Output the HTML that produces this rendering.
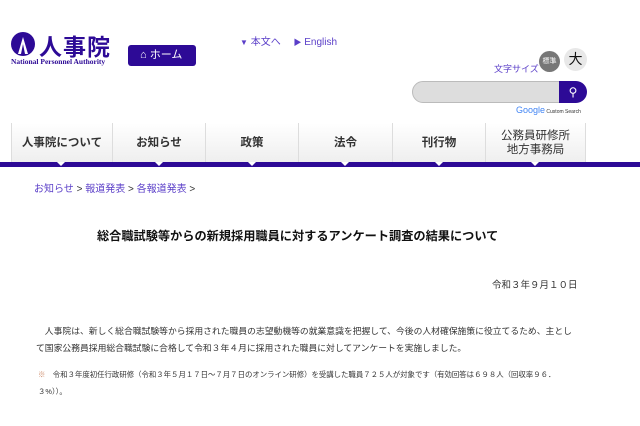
<!DOCTYPE html>
<html><head><meta charset="utf-8"><style>
*{margin:0;padding:0;box-sizing:border-box}
body{width:640px;height:426px;background:#fff;font-family:"Liberation Sans","Noto Sans CJK JP",sans-serif;position:relative;overflow:hidden;color:#222}
.a{position:absolute;white-space:nowrap}
.nav{position:absolute;top:123px;height:40px;border-left:1px solid #ddd;background:linear-gradient(#fff,#eee);font-size:11.5px;font-weight:bold;color:#333;display:flex;align-items:center;justify-content:center;text-align:center;line-height:14px}
.bar{position:absolute;left:0;top:162px;width:640px;height:5px;background:#2d0a96}
.notch{position:absolute;top:162px;width:0;height:0;border-left:4px solid transparent;border-right:4px solid transparent;border-top:4px solid #fff}
</style></head><body>
<svg class="a" style="left:11px;top:32px" width="24" height="24" viewBox="0 0 24 24"><circle cx="12" cy="12" r="12" fill="#2d0a96"/><path d="M12 5 L7 22 L10 22 L12 12 L14 22 L17 22 Z" fill="#fff"/></svg>
<div class="a" style="left:39px;top:28px;font-size:23px;font-weight:bold;color:#2d0a96;letter-spacing:1px">人事院</div>
<div class="a" style="left:11px;top:57px;font-size:7.5px;font-weight:bold;color:#2d0a96;font-family:'Liberation Serif',serif">National Personnel Authority</div>
<div class="a" style="left:128px;top:45px;width:68px;height:21px;background:#2d0a96;border-radius:3px;color:#fff;font-size:11px;line-height:21px;padding-left:12px">⌂ ホーム</div>
<div class="a" style="left:240px;top:33px;font-size:10px;color:#5a3ec8"><span style="font-size:8px">▼</span> 本文へ　 <span style="font-size:8px">▶</span> English</div>
<div class="a" style="left:494px;top:62px;font-size:9px;color:#5a3ec8">文字サイズ</div>
<div class="a" style="left:539px;top:51px;width:21px;height:21px;border-radius:50%;background:#777;color:#fff;font-size:7px;line-height:21px;text-align:center">標準</div>
<div class="a" style="left:564px;top:48px;width:23px;height:23px;border-radius:50%;background:#e8e8e8;color:#111;font-size:14px;line-height:23px;text-align:center">大</div>
<div class="a" style="left:412px;top:81px;width:150px;height:22px;border-radius:11px 0 0 11px;background:#ddd;border:1px solid #bbb"></div>
<div class="a" style="left:559px;top:81px;width:28px;height:22px;border-radius:0 11px 11px 0;background:#2d0a96;color:#fff;font-size:12px;line-height:22px;text-align:center">⚲</div>
<div class="a" style="left:516px;top:105px;font-size:9px;color:#4285f4">Google<span style="font-size:5px;color:#333"> Custom Search</span></div>
<div class="nav" style="left:11px;width:101px">人事院について</div>
<div class="nav" style="left:112px;width:93px">お知らせ</div>
<div class="nav" style="left:205px;width:93px">政策</div>
<div class="nav" style="left:298px;width:94px">法令</div>
<div class="nav" style="left:392px;width:93px">刊行物</div>
<div class="nav" style="left:485px;width:101px;border-right:1px solid #ddd;font-weight:normal;color:#333">公務員研修所<br>地方事務局</div>
<div class="bar"></div>
<div class="notch" style="left:57px"></div><div class="notch" style="left:155px"></div><div class="notch" style="left:248px"></div><div class="notch" style="left:341px"></div><div class="notch" style="left:435px"></div><div class="notch" style="left:531px"></div>
<div class="a" style="left:34px;top:180px;font-size:10px;color:#5a3ec8">お知らせ <span style="color:#333">&gt;</span> 報道発表 <span style="color:#333">&gt;</span> 各報道発表 <span style="color:#333">&gt;</span></div>
<div class="a" style="left:97px;top:226px;font-size:12.2px;font-weight:bold;color:#111">総合職試験等からの新規採用職員に対するアンケート調査の結果について</div>
<div class="a" style="left:492px;top:277px;font-size:9.5px;color:#333">令和３年９月１０日</div>
<div class="a" style="left:36px;top:323px;font-size:8.8px;color:#333;line-height:17px">　人事院は、新しく総合職試験等から採用された職員の志望動機等の就業意識を把握して、今後の人材確保施策に役立てるため、主とし<br>て国家公務員採用総合職試験に合格して令和３年４月に採用された職員に対してアンケートを実施しました。</div>
<div class="a" style="left:38px;top:366px;font-size:7.4px;color:#333;line-height:17px"><span style="color:#c86">※</span>　令和３年度初任行政研修（令和３年５月１７日～７月７日のオンライン研修）を受講した職員７２５人が対象です（有効回答は６９８人（回収率９６．<br>３%））。</div>
</body></html>
